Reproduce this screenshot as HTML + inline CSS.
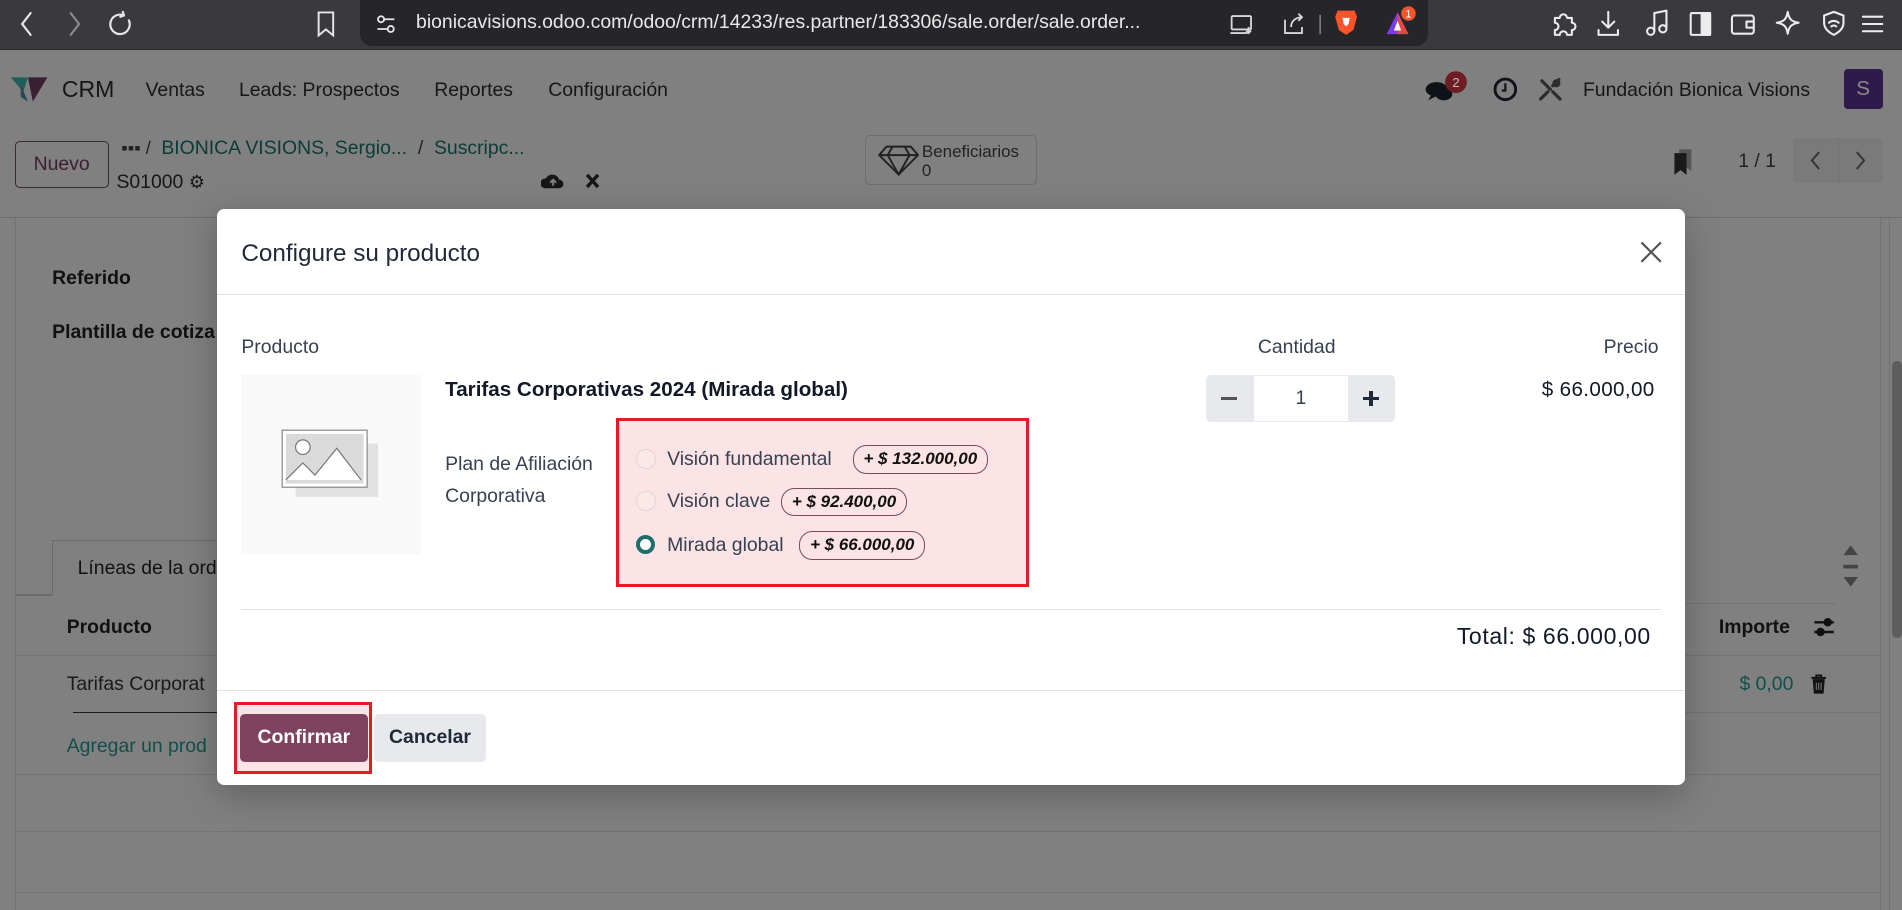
<!DOCTYPE html>
<html><head><meta charset="utf-8">
<style>
html,body{margin:0;padding:0;overflow:hidden;background:#808080;}
#w{zoom:1.2130;width:1568px;height:750px;position:relative;font-family:"Liberation Sans",sans-serif;color:#1b1b1b;overflow:hidden;background:#808080;}
.a{position:absolute;white-space:nowrap;}
.ic{position:absolute;}
</style></head><body><div id="w">
<div class="a" style="left:0;top:0;width:1568px;height:40px;background:#3a3a3e;border-bottom:1px solid #2a2a2c"></div>
<svg class="ic" style="left:8px;top:6px" width="110" height="28" viewBox="0 0 110 28" fill="none" stroke="#e6e6e6" stroke-width="1.8" stroke-linecap="round"><path d="M17 5l-7 9 7 9"/><path d="M50 5l7 9-7 9" stroke="#8a8a8a"/><path d="M94 7a8 8 0 1 0 4 4M94 7l-1-3M94 7l-3 1"/></svg>
<svg class="ic" style="left:260px;top:8px" width="18" height="24" viewBox="0 0 18 24" fill="none" stroke="#e6e6e6" stroke-width="1.6"><path d="M3 2h12v19l-6-5-6 5z"/></svg>
<div class="a" style="left:297px;top:0;width:880px;height:38px;background:#26262a;border-radius:0 0 10px 10px"></div>
<svg class="ic" style="left:309px;top:10px" width="18" height="20" viewBox="0 0 18 20" fill="none" stroke="#e6e6e6" stroke-width="1.5"><circle cx="5" cy="6" r="2.5"/><path d="M8 6h8M2 14h8"/><circle cx="13" cy="14" r="2.5"/></svg>
<div class="a" style="left:343px;top:9px;font-size:16px;color:#e8e8e8">bionicavisions.odoo.com/odoo/crm/14233/res.partner/183306/sale.order/sale.order...</div>
<svg class="ic" style="left:1012px;top:8px" width="80" height="24" viewBox="0 0 80 24" fill="none" stroke="#d8d8d8" stroke-width="1.5"><rect x="3" y="5" width="16" height="11" rx="1"/><path d="M2 19h14M17 14v5M15 17l2 2 2-2"/><path d="M47 8v11h14v-5M52 14c0-5 4-8 9-8M58 3l3 3-3 3"/><path d="M76 4v16" stroke="#777"/></svg>
<svg class="ic" style="left:1100px;top:6px" width="20" height="24" viewBox="0 0 20 24"><path d="M3 3h14l2 5-3 11-6 4-6-4L1 8z" fill="#fb542b"/><path d="M7 9h6l-1 5-2 2-2-2z" fill="#fff"/></svg>
<svg class="ic" style="left:1140px;top:4px" width="30" height="28" viewBox="0 0 30 28"><path d="M12 6L3 24h18z" fill="#7c3aed"/><path d="M12 6l9 18H12z" fill="#e84545"/><path d="M12 13l-3 8h6z" fill="#fff"/><circle cx="21" cy="7" r="6" fill="#f0552b"/><text x="21" y="10.5" font-size="9" fill="#fff" text-anchor="middle" font-family="Liberation Sans">1</text></svg>
<svg class="ic" style="left:1278px;top:6px" width="280" height="28" viewBox="0 0 280 28" fill="none" stroke="#ececec" stroke-width="1.7" stroke-linecap="round" stroke-linejoin="round"><path d="M4 9h4a3 3 0 1 1 6 0h4v4a3 3 0 1 1 0 6v4H14a3 3 0 1 0-6 0H4v-4a3 3 0 1 0 0-6z"/><path d="M48 4v13M43 12l5 5 5-5M40 19v4h16v-4"/><path d="M86 20V5l10-2v14"/><circle cx="83" cy="20" r="3"/><circle cx="93" cy="18" r="3"/><rect x="116" y="5" width="16" height="18" rx="1"/><rect x="125" y="5" width="7" height="18" fill="#ececec"/><rect x="150" y="7" width="18" height="15" rx="2"/><path d="M168 12h-6v5h6"/><path d="M196 4c1 6 3 8 9 9-6 1-8 3-9 9-1-6-3-8-9-9 6-1 8-3 9-9z"/><path d="M234 4l8 3v6c0 5-4 8-8 10-4-2-8-5-8-10V7z"/><path d="M230 13a6 6 0 0 1 8 0M232 16a3 3 0 0 1 4 0"/><path d="M258 8h16M258 14h16M258 20h16"/></svg>

<svg class="ic" style="left:9px;top:62px" width="32" height="24" viewBox="0 0 32 24"><path d="M0 2h14l-4 12z" fill="#1e5f5a"/><path d="M14 2h16l-12 20z" fill="#3a1f33"/><path d="M8 8l6 14-6-4z" fill="#264a50"/></svg>
<div class="a" style="left:51px;top:63px;font-size:19px;color:#161616">CRM</div>
<div class="a" style="left:120px;top:65px;font-size:16px;color:#161616">Ventas</div>
<div class="a" style="left:197px;top:65px;font-size:16px;color:#161616">Leads: Prospectos</div>
<div class="a" style="left:358px;top:65px;font-size:16px;color:#161616">Reportes</div>
<div class="a" style="left:452px;top:65px;font-size:16px;color:#161616">Configuración</div>
<svg class="ic" style="left:1172px;top:58px" width="44" height="30" viewBox="0 0 44 30"><ellipse cx="12" cy="16" rx="9" ry="6" fill="#0f1318"/><ellipse cx="18" cy="20" rx="7" ry="5" fill="#0f1318"/><path d="M8 20l-3 5 6-3z" fill="#0f1318"/><circle cx="28" cy="10" r="9" fill="#6f1d24"/><text x="28" y="14" font-size="11" fill="#bbb" text-anchor="middle" font-family="Liberation Sans">2</text></svg>
<svg class="ic" style="left:1230px;top:63px" width="22" height="22" viewBox="0 0 22 22" fill="none" stroke="#0f1318" stroke-width="2.4"><circle cx="11" cy="11" r="8.5"/><path d="M11 6v6h-3" stroke-width="1.8"/></svg>
<svg class="ic" style="left:1267px;top:63px" width="22" height="22" viewBox="0 0 22 22" fill="none" stroke="#2c2c2c" stroke-width="2.6" stroke-linecap="round"><path d="M4 4l7 7M13 13l6 6M18 3l-5 5M9 13l-6 6"/><circle cx="16" cy="6" r="2" fill="#2c2c2c"/></svg>
<div class="a" style="left:1305px;top:65px;font-size:16px;color:#161616">Fundación Bionica Visions</div>
<div class="a" style="left:1520px;top:57px;width:32px;height:33px;background:#2f1a4c;border-radius:3px;color:#8b8b8b;font-size:17px;text-align:center;line-height:33px">S</div>

<div class="a" style="left:12px;top:116px;width:76px;height:37px;border:1px solid #3a2a33;border-radius:4px;font-size:16px;text-align:center;line-height:37px;color:#3c1f31">Nuevo</div>
<div class="a" style="left:100px;top:114px;font-size:15px;color:#222">▪▪▪ /</div>
<div class="a" style="left:133px;top:113px;font-size:16px;color:#0b3b37">BIONICA VISIONS, Sergio...&nbsp;&nbsp;<span style="color:#222">/</span>&nbsp;&nbsp;Suscripc...</div>
<div class="a" style="left:96px;top:141px;font-size:16px;color:#161616">S01000 <span style="font-size:15px">⚙</span></div>
<svg class="ic" style="left:446px;top:140px" width="54" height="18" viewBox="0 0 54 18"><path d="M3 15a4 4 0 0 1 1-8 6 6 0 0 1 11 1 3.5 3.5 0 0 1 0 7z" fill="#161616"/><path d="M10 13V8M7.5 10.5L10 8l2.5 2.5" stroke="#808080" stroke-width="1.6" fill="none"/><path d="M38 4l9 10M47 4l-9 10" stroke="#161616" stroke-width="2.8"/></svg>
<div class="a" style="left:713px;top:111px;width:140px;height:40px;border:1px solid #6e6e6e;border-radius:4px"></div>
<svg class="ic" style="left:724px;top:118px" width="34" height="28" viewBox="0 0 34 28" fill="none" stroke="#222" stroke-width="1.6"><path d="M7 3h20l6 7-16 16L1 10z"/><path d="M1 10h32M12 3l-4 7 9 16 9-16-4-7"/></svg>
<div class="a" style="left:760px;top:117px;font-size:14px;color:#222;line-height:16px">Beneficiarios<br>0</div>
<svg class="ic" style="left:1378px;top:121px" width="20" height="26" viewBox="0 0 20 26"><path d="M6 2h10v18l-5-4-5 4z" fill="#555"/><path d="M2 5h10v18l-5-4-5 4z" fill="#1a1a1a"/></svg>
<div class="a" style="left:1433px;top:124px;font-size:16px;color:#222">1 / 1</div>
<div class="a" style="left:1478px;top:114px;width:74px;height:37px;background:#7a7a7a;border-radius:4px"></div>
<div class="a" style="left:1515px;top:114px;width:1px;height:37px;background:#707070"></div>
<svg class="ic" style="left:1485px;top:120px" width="62" height="24" viewBox="0 0 62 24" fill="none" stroke="#333" stroke-width="1.6"><path d="M15 5l-6 7 6 7M46 5l6 7-6 7"/></svg>
<div class="a" style="left:0;top:179px;width:1568px;height:1px;background:#6e6e6e"></div>

<div class="a" style="left:12px;top:180px;width:1px;height:570px;background:#737373"></div>
<div class="a" style="left:1550px;top:180px;width:1px;height:570px;background:#737373"></div>
<div class="a" style="left:43px;top:220px;font-size:16px;font-weight:bold;color:#111">Referido</div>
<div class="a" style="left:43px;top:265px;font-size:16px;font-weight:bold;color:#111">Plantilla de cotiza</div>
<div class="a" style="left:43px;top:445px;width:140px;height:45px;border:1px solid #6a6a6a;border-bottom:none;border-right:none"></div>
<div class="a" style="left:64px;top:459px;font-size:16px;color:#111">Líneas de la ord</div>
<div class="a" style="left:12px;top:490px;width:31px;height:1px;background:#6a6a6a"></div>
<div class="a" style="left:55px;top:508px;font-size:16px;font-weight:bold;color:#111">Producto</div>
<div class="a" style="left:12px;top:540px;width:1538px;height:1px;background:#737373"></div>
<div class="a" style="left:55px;top:555px;font-size:16px;color:#1a1a1a">Tarifas Corporat</div>
<div class="a" style="left:60px;top:587px;width:1200px;height:1px;background:#1a1a1a"></div>
<div class="a" style="left:1389px;top:587px;width:161px;height:1px;background:#737373"></div>
<div class="a" style="left:55px;top:606px;font-size:16px;color:#124f4b">Agregar un prod</div>
<div class="a" style="left:12px;top:638px;width:1538px;height:1px;background:#737373"></div>
<div class="a" style="left:12px;top:685px;width:1538px;height:1px;background:#737373"></div>
<div class="a" style="left:12px;top:735px;width:1538px;height:1px;background:#737373"></div>
<div class="a" style="left:1389px;top:497px;width:124px;height:1px;background:#737373"></div>
<div class="a" style="left:1417px;top:508px;font-size:16px;font-weight:bold;color:#111">Importe</div>
<svg class="ic" style="left:1494px;top:507px" width="20" height="20" viewBox="0 0 20 20" stroke="#111" stroke-width="2"><path d="M2 6h16M2 14h16"/><circle cx="13" cy="6" r="2.5" fill="#111"/><circle cx="7" cy="14" r="2.5" fill="#111"/></svg>
<div class="a" style="left:1434px;top:555px;font-size:16px;color:#124f4b">$ 0,00</div>
<svg class="ic" style="left:1491px;top:555px" width="16" height="18" viewBox="0 0 16 18"><path d="M2 4h12M6 4V2h4v2" stroke="#111" stroke-width="1.6" fill="none"/><path d="M3 5h10l-1 12H4z" fill="#111"/><path d="M6 8v6M8 8v6M10 8v6" stroke="#808080" stroke-width="0.8"/></svg>
<svg class="ic" style="left:1518px;top:448px" width="16" height="40" viewBox="0 0 16 40" fill="#444"><path d="M8 2l6 8H2z"/><rect x="2" y="18" width="12" height="3"/><path d="M2 28h12l-6 8z"/></svg>
<div class="a" style="left:1560px;top:298px;width:8px;height:228px;background:#5d5d5d;border-radius:4px"></div>
<div class="a" style="left:1557px;top:180px;width:1px;height:570px;background:#737373"></div>

<div class="a" style="left:179px;top:172px;width:1210px;height:475px;background:#fff;border-radius:6px;box-shadow:0 8px 30px rgba(0,0,0,.25)"></div>
<div class="a" style="left:199px;top:198px;font-size:20px;color:#1f2937">Configure su producto</div>
<svg class="ic" style="left:1351px;top:198px" width="20" height="20" viewBox="0 0 20 20" stroke="#555" stroke-width="1.8"><path d="M2 2l16 16M18 2L2 18"/></svg>
<div class="a" style="left:179px;top:242px;width:1210px;height:1px;background:#dee2e6"></div>
<div class="a" style="left:199px;top:277px;font-size:16px;color:#374151">Producto</div>
<div class="a" style="left:1037px;top:277px;font-size:16px;color:#374151">Cantidad</div>
<div class="a" style="left:1322px;top:277px;font-size:16px;color:#374151">Precio</div>
<div class="a" style="left:199px;top:309px;width:148px;height:148px;background:#f9f9f9"></div>
<svg class="ic" style="left:232px;top:354px" width="82" height="58" viewBox="0 0 82 58"><rect x="12" y="12" width="68" height="44" fill="#e2e2e2"/><rect x="1" y="1" width="70" height="47" fill="#fff" stroke="#888" stroke-width="1"/><rect x="4" y="4" width="64" height="41" fill="#dadada"/><circle cx="18" cy="15" r="6" fill="#fff" stroke="#777"/><path d="M4 42l14-14 10 10 18-22 20 26" fill="#fff" stroke="#777"/></svg>
<div class="a" style="left:367px;top:312px;font-size:17px;font-weight:bold;color:#111827">Tarifas Corporativas 2024 (Mirada global)</div>
<div class="a" style="left:367px;top:369px;font-size:16px;color:#374151;line-height:27px">Plan de Afiliación<br>Corporativa</div>
<div class="a" style="left:508px;top:345px;width:335px;height:134px;border:3px solid #e31b23;background:#fce4e6"></div>
<div class="a" style="left:524px;top:370px;width:15px;height:15px;border:1px solid #e5d3d6;border-radius:50%;background:#fbe9ea"></div>
<div class="a" style="left:524px;top:405px;width:15px;height:15px;border:1px solid #e5d3d6;border-radius:50%;background:#fbe9ea"></div>
<div class="a" style="left:524px;top:441px;width:9px;height:9px;border:4px solid #1d6f6c;border-radius:50%;background:#fff"></div>
<div class="a" style="left:550px;top:369px;font-size:16px;color:#374151">Visión fundamental</div>
<div class="a" style="left:703px;top:367px;height:22px;padding:0 8px;border:1px solid #7a4a5f;border-radius:11px;font-size:14px;line-height:22px;font-style:italic;font-weight:bold;color:#111">+ $ 132.000,00</div>
<div class="a" style="left:550px;top:404px;font-size:16px;color:#374151">Visión clave</div>
<div class="a" style="left:644px;top:402px;height:22px;padding:0 8px;border:1px solid #7a4a5f;border-radius:11px;font-size:14px;line-height:22px;font-style:italic;font-weight:bold;color:#111">+ $ 92.400,00</div>
<div class="a" style="left:550px;top:440px;font-size:16px;color:#374151">Mirada global</div>
<div class="a" style="left:659px;top:438px;height:22px;padding:0 8px;border:1px solid #7a4a5f;border-radius:11px;font-size:14px;line-height:22px;font-style:italic;font-weight:bold;color:#111">+ $ 66.000,00</div>
<div class="a" style="left:994px;top:309px;width:156px;height:39px;background:#e7e9ed;border-radius:4px"></div>
<div class="a" style="left:1034px;top:310px;width:77px;height:37px;background:#fff;text-align:center;line-height:37px;font-size:16px;color:#374151">1</div>
<div class="a" style="left:1007px;top:327px;width:13px;height:3px;background:#555"></div>
<div class="a" style="left:1124px;top:327px;width:13px;height:3px;background:#1f2937"></div>
<div class="a" style="left:1129px;top:322px;width:3px;height:13px;background:#1f2937"></div>
<div class="a" style="left:1271px;top:312px;font-size:17px;color:#111827;letter-spacing:0.3px">$ 66.000,00</div>
<div class="a" style="left:199px;top:502px;width:1170px;height:1px;background:#dee2e6"></div>
<div class="a" style="left:1201px;top:514px;font-size:19px;color:#111827;letter-spacing:0.5px">Total: $ 66.000,00</div>
<div class="a" style="left:179px;top:569px;width:1210px;height:1px;background:#dee2e6"></div>
<div class="a" style="left:193px;top:579px;width:109px;height:54px;border:3px solid #e31b23;background:#fce4e6"></div>
<div class="a" style="left:198px;top:589px;width:105px;height:39px;background:#7f4360;border-radius:4px;color:#fff;font-size:16px;font-weight:bold;text-align:center;line-height:39px">Confirmar</div>
<div class="a" style="left:308px;top:589px;width:93px;height:39px;background:#e7e9ed;border-radius:4px;color:#1f2937;font-size:16px;font-weight:bold;text-align:center;line-height:39px">Cancelar</div>
</div></body></html>
